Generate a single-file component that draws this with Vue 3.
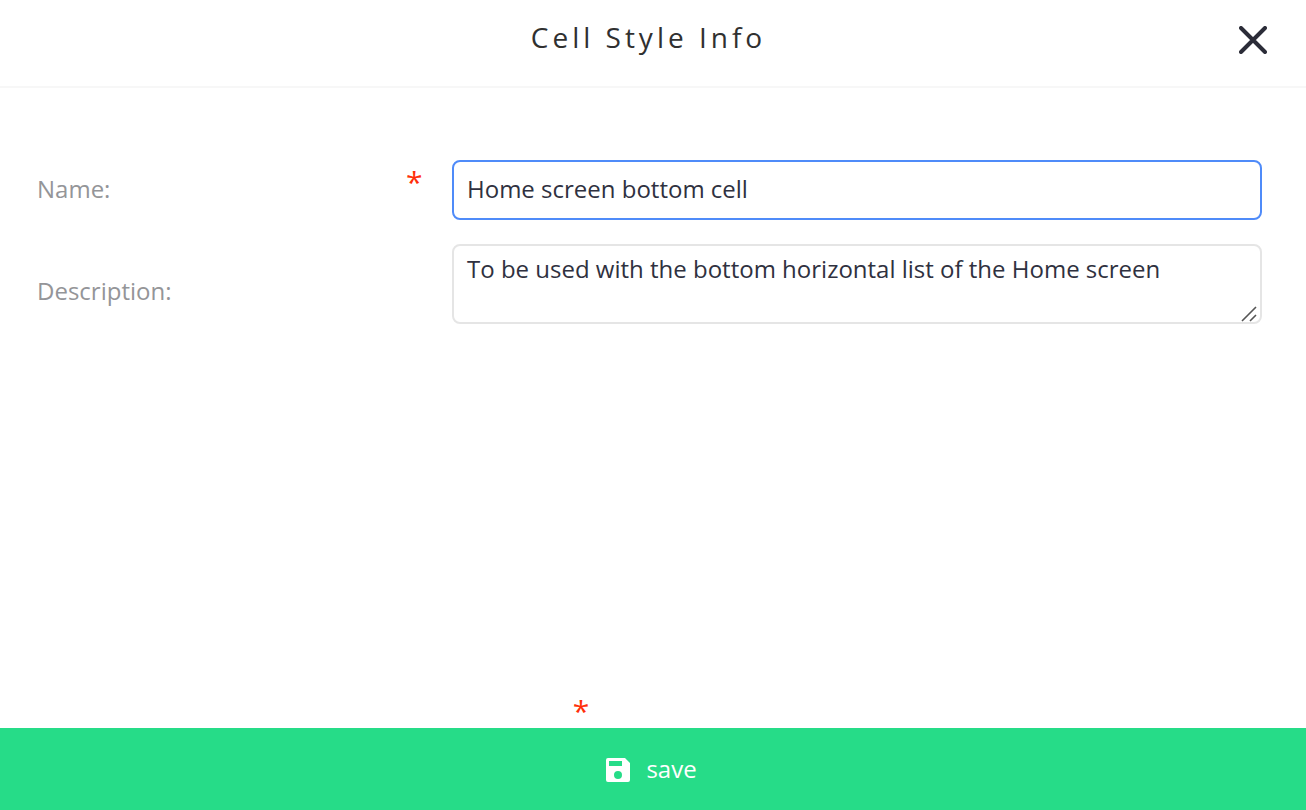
<script setup>
import { ref } from 'vue'
const name = ref('Home screen bottom cell')
const description = ref('To be used with the bottom horizontal list of the Home screen')
</script>

<template>
  <form class="dialog" @submit.prevent>
    <header class="header">
      <h1>Cell Style Info</h1>
      <button class="close" type="button" aria-label="Close">
        <svg viewBox="0 0 28 28" width="28" height="28"><path d="M2 2 26 26M26 2 2 26" stroke="#2b2c38" stroke-width="4" stroke-linecap="round" fill="none" /></svg>
      </button>
    </header>
    <main class="body">
      <div class="row">
        <label for="name">Name:</label>
        <span class="star">*</span>
        <input id="name" v-model="name" type="text" />
      </div>
      <div class="row">
        <label class="low" for="description">Description:</label>
        <span></span>
        <div class="area">
          <textarea id="description" v-model="description"></textarea>
          <svg class="grip" viewBox="0 0 16 16" width="16" height="16"><path d="M1 15 15 1M9 15 15 9" stroke="#555" stroke-width="1.6" fill="none" /></svg>
        </div>
      </div>
    </main>
    <div class="note"><span class="star">*</span></div>
    <button class="save" type="submit">
      <svg viewBox="0 -4 26 30" width="26" height="30"><path fill="#fff" fill-rule="evenodd" d="M3 1H20L25 6V23Q25 25 23 25H3Q1 25 1 23V3Q1 1 3 1ZM4 4V9H17V4ZM13 14A4 4 0 1 0 13 22A4 4 0 1 0 13 14Z" /></svg>
      <span>save</span>
    </button>
  </form>
</template>

<style>
body { background: #fff; }
</style>
<style scoped>
* { box-sizing: border-box; }
.dialog { min-height: 100vh; display: flex; flex-direction: column; font-family: "Open Sans", "Noto Sans", sans-serif; font-size: 24px; color: #2f3140; }
.header { display: grid; grid-template-columns: 84px 1fr 80px; align-items: start; height: 88px; padding: 19px 13px 0 0; border-bottom: 2px solid #f7f7f7; }
h1 { grid-column: 2; margin: 0; text-align: center; font-size: 28px; line-height: 36px; font-weight: 400; letter-spacing: 4px; color: #303030; }
.close { display: flex; justify-content: center; border: 0; padding: 7px 0; background: none; }
.body { flex: 1; display: flex; flex-direction: column; gap: 24px; padding: 72px 44px 0 37px; }
.row { display: grid; grid-template-columns: 369px 46px 1fr; align-items: center; }
label { padding-bottom: 2px; line-height: 34px; color: #949598; }
.low { padding-top: 16px; }
.star { align-self: start; color: #ff2f0a; font-size: 30px; line-height: 44px; }
input, textarea { display: block; width: 100%; font: inherit; color: inherit; background: #fff; border: 2px solid #e5e5e5; border-radius: 8px; outline: 0; }
input { height: 60px; padding: 0 13px 4px; border-color: #4f8bf9; }
.area { position: relative; }
textarea { height: 80px; padding: 6px 13px; line-height: 34px; resize: none; }
.grip { position: absolute; right: 5px; bottom: 2px; }
.note { display: flex; justify-content: center; height: 39px; padding-right: 144px; }
.save { display: flex; align-items: center; justify-content: center; gap: 15px; width: 100%; height: 82px; padding: 0 4px 2px 0; border: 0; background: #26dc88; color: #fff; font: inherit; }
</style>
